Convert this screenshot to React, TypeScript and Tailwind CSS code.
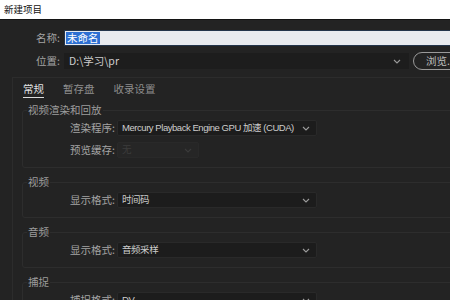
import type { ReactNode } from "react";

const Chevron = ({ className = "" }: { className?: string }) => (
  <svg viewBox="0 0 8 5" className={`h-[5px] w-[8px] shrink-0 ${className}`} fill="none">
    <polyline points="1,1 4,4 7,1" stroke="currentColor" strokeWidth="1.1" />
  </svg>
);

interface SelectProps {
  value: string;
  width: string;
  disabled?: boolean;
}

const Select = ({ value, width, disabled }: SelectProps) => (
  <div
    className={`flex h-[16px] shrink-0 items-center justify-between overflow-hidden rounded-[2px] border border-[#292929] pl-[4px] pr-[6px] ${width} ${
      disabled ? "bg-[#262626] text-[#3c3c3c]" : "bg-[#1c1c1c] text-[#cdcdcd]"
    }`}
  >
    <span className="whitespace-nowrap font-['Liberation_Sans','Noto_Sans_CJK_SC',sans-serif] text-[9.5px] tracking-[-0.45px]">
      {value}
    </span>
    <Chevron className={disabled ? "text-[#3a3a3a]" : "text-[#9a9a9a]"} />
  </div>
);

const Row = ({ label, children }: { label: string; children: ReactNode }) => (
  <div className="grid h-[16px] grid-cols-[94px_auto] items-center">
    <span className="whitespace-nowrap pr-[2px] text-right text-[#a3a3a3]">{label}</span>
    {children}
  </div>
);

const Group = ({ title, children }: { title: string; children: ReactNode }) => (
  <fieldset className="mb-[6px] rounded-[3px] border border-[#2d2d2d] pt-[2px] pb-[9px]">
    <legend className="ml-[4px] h-[16px] px-[1px] leading-[16px] text-[#9c9c9c]">{title}</legend>
    <div className="flex flex-col gap-[6px]">{children}</div>
  </fieldset>
);

export default function App() {
  return (
    <div className="h-[300px] w-[450px] overflow-hidden bg-[#232323] font-['Noto_Sans_CJK_SC','Noto_Sans',sans-serif] text-[10.5px] leading-none">
      <div className="flex h-[20px] items-center border-b border-[#141414] bg-white px-[4px] pt-[1px] text-[9.5px] text-[#111]">
        新建项目
      </div>

      <div className="flex w-[480px] flex-col gap-[6px] pt-[10px]">
        <div className="flex h-[16px] items-center">
          <span className="w-[64px] shrink-0 pr-[4px] text-right text-[#a3a3a3]">名称:</span>
          <div className="flex h-[16px] flex-1 items-center border border-[#23344a] bg-[#e8eaee] pl-[1px]">
            <span className="bg-[#2d6fd2] px-[1px] py-[1px] text-white">未命名</span>
          </div>
        </div>
        <div className="flex h-[18px] items-center">
          <span className="w-[64px] shrink-0 pr-[4px] text-right text-[#a3a3a3]">位置:</span>
          <div className="flex h-[16px] w-[345px] shrink-0 items-center justify-between bg-[#1d1d1d] pl-[5px] pr-[8px] text-[#cdcdcd]">
            <span>D:\学习\pr</span>
            <Chevron className="text-[#9a9a9a]" />
          </div>
          <div className="ml-[4px] flex h-[18px] w-[62px] shrink-0 items-center rounded-full border border-[#9a9a9a] pl-[12px] text-[#bdbdbd]">
            浏览...
          </div>
        </div>
      </div>

      <div className="ml-[12px] mt-[7px] w-[470px] border-l border-t border-[#2c2c2c] pl-[9px]">
        <div className="flex h-[20px] items-end gap-[19px] pl-[1px]">
          <span className="border-b border-[#dcdcdc] pb-[3px] text-[#e2e2e2]">常规</span>
          <span className="pb-[4px] text-[#8e8e8e]">暂存盘</span>
          <span className="pb-[4px] text-[#8e8e8e]">收录设置</span>
        </div>

        <div className="pt-[4px]">
          <Group title="视频渲染和回放">
            <Row label="渲染程序:">
              <Select value="Mercury Playback Engine GPU 加速 (CUDA)" width="w-[200px]" />
            </Row>
            <Row label="预览缓存:">
              <Select value="无" width="w-[82px]" disabled />
            </Row>
          </Group>
          <Group title="视频">
            <Row label="显示格式:">
              <Select value="时间码" width="w-[200px]" />
            </Row>
          </Group>
          <Group title="音频">
            <Row label="显示格式:">
              <Select value="音频采样" width="w-[200px]" />
            </Row>
          </Group>
          <Group title="捕捉">
            <Row label="捕捉格式:">
              <Select value="DV" width="w-[200px]" />
            </Row>
          </Group>
        </div>
      </div>
    </div>
  );
}
